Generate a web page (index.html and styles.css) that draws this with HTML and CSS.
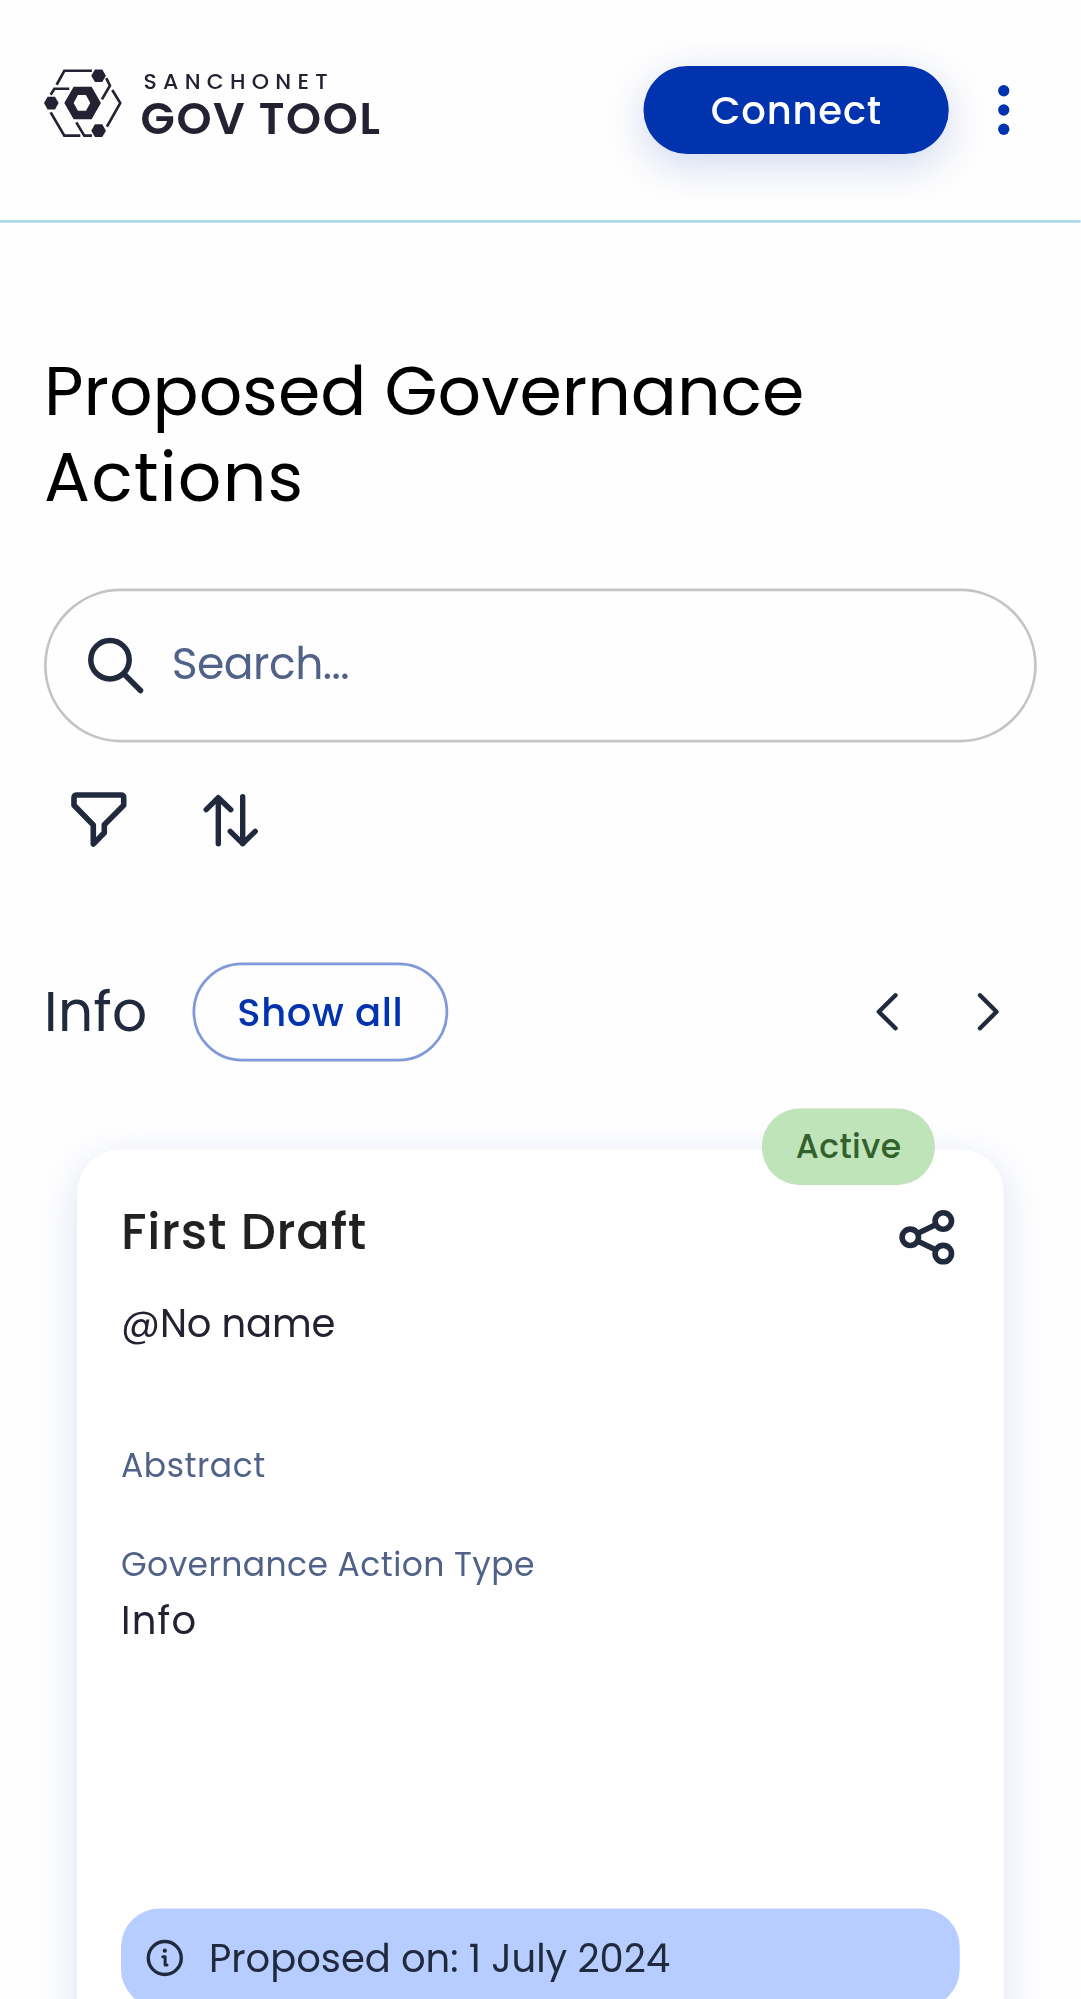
FILE: index.html
```html
<!DOCTYPE html>
<html lang="en">
<head>
<meta charset="utf-8">
<title>SanchoNet GovTool</title>
<link rel="stylesheet" href="styles.css">
</head>
<body>
<div class="app">
<header class="topbar">
  <svg class="logo" viewBox="42 56 1011 208" role="img" aria-label="SanchoNet Gov Tool">
    <g class="logo-lines">
      <path d="M80 104L103 62H186M247 120L271 159L231 230M62 187L103 257H151M62 134L73 116H118M229 84L240 107L216 148M139 217L163 257H186"/>
    </g>
    <g class="logo-fill">
      <path d="M184 77L195 58H217L228 77L217 96H195Z"/>
      <path d="M42 159L53 140H75L86 159L75 178H53Z"/>
      <path d="M184 242L195 223H217L228 242L217 261H195Z"/>
      <path fill-rule="evenodd" d="M103 159L131 110H185L213 159L185 208H131ZM131 159L144 182H168L181 159L168 135H144Z"/>
      <text class="logo-small" x="341" y="116.5" textLength="553">SANCHONET</text>
      <text class="logo-big" x="332" y="251.5" textLength="719">GOV TOOL</text>
    </g>
  </svg>
  <div class="topbar-actions">
    <button class="connect">Connect</button>
    <svg class="menu" viewBox="0 0 24 24"><circle cx="12" cy="5" r="2.05"/><circle cx="12" cy="12" r="2.05"/><circle cx="12" cy="19" r="2.05"/></svg>
  </div>
</header>
<main class="page">
  <h1 class="title"><span class="title-line">Proposed Governance </span><span class="title-line title-end">Actions</span></h1>
  <div class="search">
    <svg class="icon" viewBox="-4 -4 66 66" stroke-width="5.5"><circle cx="23.5" cy="23.2" r="19.2"/><path d="M38 38L54 54"/></svg>
    <span class="placeholder">Search...</span>
  </div>
  <div class="tools">
    <svg class="icon" viewBox="-4.5 -4.5 66 66" stroke-width="5.6"><path d="M6.5 4H50.5Q53.2 4 53.2 6.7V14.3L33.8 33.7V41.7L22.8 53V34L3.5 14.3V6.7Q3.5 4 6.5 4Z"/></svg>
    <svg class="icon" viewBox="-3 -4.2 66 66" stroke-width="5.4"><path d="M17.3 53V7M5.2 19L17.3 7L29.8 19M41.7 6V53M29.2 40.6L41.7 53L54.2 40.6"/></svg>
  </div>
  <div class="section-head">
    <h2 class="section-title">Info</h2>
    <button class="show-all">Show all</button>
    <div class="arrows">
      <svg class="icon" viewBox="-22.3 -12.8 66 66" stroke-width="4.4"><path d="M20.7 3.5L4 20L20.7 36.5"/></svg>
      <svg class="icon" viewBox="-19.5 -12.8 66 66" stroke-width="4.4"><path d="M3.5 3.5L20 20L3.5 36.5"/></svg>
    </div>
  </div>
  <article class="card">
    <span class="badge">Active</span>
    <div class="card-head">
      <h3 class="card-title">First Draft</h3>
      <svg class="icon" viewBox="-5.25 -4.8 66 66" stroke-width="5.6"><circle cx="11.3" cy="28" r="8.2"/><circle cx="44.3" cy="11.7" r="8.2"/><circle cx="44.3" cy="44.3" r="8.2"/><path d="M19 24L36.6 15.5M19 32L36.6 40.5"/></svg>
    </div>
    <p class="author">@No name</p>
    <p class="label abstract">Abstract</p>
    <p class="label type">Governance Action Type</p>
    <p class="value">Info</p>
    <div class="date">
      <svg class="icon" viewBox="-8.3 -8.5 55 55" stroke-width="3.4"><circle cx="19" cy="19" r="16.5"/><path stroke-width="3" d="M17 17.8H19.3V26H21.2"/><circle class="dot" cx="19" cy="11.7" r="2.1"/></svg>
      <span class="date-text">Proposed on: 1 July 2024</span>
    </div>
  </article>
</main>
</div>
</body>
</html>
```
FILE: styles.css
```css
* { box-sizing: border-box; margin: 0; padding: 0; }
html, body { height: 1999px; overflow: hidden; }
body { background: #fefefe; }

/* Phone layout: 393 x 727 units, enlarged to fill the window */
.app {
  width: 393.1px;
  height: 726.9px;
  overflow: hidden;
  transform: scale(2.75);
  transform-origin: 0 0;
  font-family: Poppins, Inter, sans-serif;
  color: #212a3d;
  white-space: nowrap;
}
button { font: inherit; background: none; border: 0; }
svg { display: block; flex: none; overflow: visible; }
.icon { width: 24px; height: 24px; fill: none; stroke: #212a3d; stroke-linecap: round; stroke-linejoin: round; }
.icon .dot { fill: #212a3d; stroke: none; }

.topbar {
  display: flex;
  justify-content: space-between;
  align-items: flex-start;
  height: 81px;
  padding: 24px 16px 0;
  border-bottom: 1px solid #add8e6;
}
.logo { width: 122.4px; height: 25.2px; margin-top: 1px; }
.logo-lines { fill: none; stroke: #242232; stroke-width: 8; }
.logo-fill { fill: #242232; }
.logo-small { font-size: 66px; font-weight: 500; }
.logo-big { font-size: 134px; font-weight: 600; }
.topbar-actions { display: flex; align-items: center; gap: 8px; }
.connect {
  width: 111px;
  height: 32px;
  border-radius: 16px;
  background: #0033ad;
  color: #fff;
  font-size: 14px;
  font-weight: 500;
  letter-spacing: 0.3px;
  box-shadow: 0 4px 15px rgba(0, 51, 173, 0.19);
}
.menu { width: 24px; height: 24px; fill: #0033ad; }

.page { padding: 45.6px 16px 0; }
.title { font-size: 24.8px; font-weight: 400; line-height: 31.2px; color: #000; }
.title-line { display: block; }
.title-end { letter-spacing: 0.44px; }

.search {
  display: flex;
  align-items: center;
  gap: 8.45px;
  height: 56px;
  margin-top: 25px;
  padding-left: 13px;
  border: 1px solid #c4c4c4;
  border-radius: 28px;
}
.placeholder { margin-top: -2px; font-size: 16px; letter-spacing: -0.18px; color: #506288; }
.tools { display: flex; gap: 24px; margin-top: 16px; padding-left: 8px; }

.section-head { display: flex; align-items: center; height: 36px; margin-top: 40px; }
.section-title { width: 54px; font-size: 20px; font-weight: 400; line-height: 24px; letter-spacing: 0.15px; }
.show-all {
  width: 93px;
  height: 36px;
  padding-top: 1px;
  border: 1px solid #8099d9;
  border-radius: 18px;
  color: #0033ad;
  font-size: 14px;
  font-weight: 500;
  letter-spacing: 0.23px;
}
.arrows { display: flex; gap: 14px; margin-left: auto; padding-right: 5.1px; }

.card {
  position: relative;
  height: 340px;
  margin: 32px 12px 0;
  padding: 18px 16px 0;
  border-radius: 16px;
  background: #fff;
  box-shadow: 0 4px 15px #dde3f5;
}
.badge {
  position: absolute;
  top: -15px;
  right: 25px;
  width: 63px;
  height: 28px;
  border-radius: 14px;
  background: #c0e4ba;
  color: #33612b;
  font-size: 12px;
  font-weight: 500;
  letter-spacing: 0.15px;
  line-height: 28px;
  text-align: center;
}
.card-head { display: flex; justify-content: space-between; height: 24px; }
.card-head .icon { margin-top: 2px; }
.card-title { font-size: 18px; font-weight: 500; line-height: 24px; letter-spacing: 0.27px; color: #212121; }
.author { margin-top: 11px; font-size: 14px; line-height: 20px; letter-spacing: -0.04px; color: #242232; }
.label { font-size: 12px; line-height: 16px; color: #506288; }
.abstract { margin-top: 34px; letter-spacing: 0.2px; }
.type { margin-top: 20px; letter-spacing: 0.155px; }
.value { margin-top: 2px; font-size: 14px; line-height: 20px; letter-spacing: 0.45px; color: #242232; }
.date {
  display: flex;
  align-items: center;
  gap: 6px;
  height: 36px;
  margin-top: 95px;
  padding-left: 6px;
  border-radius: 14px;
  background: #b7cdff;
}
.date .icon { width: 20px; height: 20px; }
.date-text { margin-top: 1px; font-size: 14px; line-height: 21px; letter-spacing: -0.01px; }
```
